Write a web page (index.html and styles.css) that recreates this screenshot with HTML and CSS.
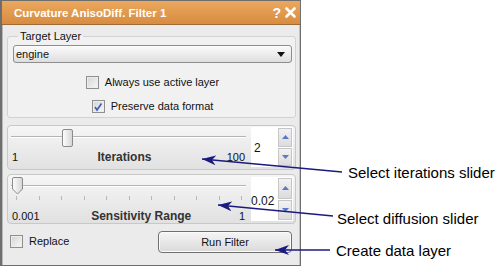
FILE: index.html
```html
<!doctype html>
<html lang="en-us">
  <head>
    <meta charset="utf-8">
    <title>Curvature AnisoDiff. Filter 1</title>
    <link rel="stylesheet" href="styles.css">
  </head>
  <body>
	<div class="stage">
		<div class="panel">
			<div class="titlebar">
				<span class="title">Curvature AnisoDiff. Filter 1</span>
				<span class="tools">
					<span class="help">?</span>
					<svg class="close" width="11" height="11" viewBox="0 0 11 11"><path d="M1.5 1.5 L9.5 9.5 M9.5 1.5 L1.5 9.5" stroke="#fff" stroke-width="2.6" stroke-linecap="round"/></svg>
				</span>
			</div>
			<div class="content">
				<fieldset class="group">
					<legend>Target Layer</legend>
					<div class="combo">
						<span>engine</span>
						<svg width="8" height="5" viewBox="0 0 8 5"><path d="M0 0 H8 L4 5 Z" fill="#111"/></svg>
					</div>
					<div class="checks">
						<label class="check"><span class="box"></span>Always use active layer</label>
						<label class="check"><span class="box checked"><svg width="10" height="10" viewBox="0 0 10 10"><path d="M2 5 L4 8 L8.5 1.5" stroke="#3a5cb8" stroke-width="1.6" fill="none"/></svg></span>Preserve data format</label>
					</div>
				</fieldset>

				<div class="slider-box">
					<div class="slider">
						<div class="track">
							<div class="groove"></div>
							<div class="handle" style="left: 51px;"></div>
						</div>
						<div class="labels">
							<span>1</span>
							<b>Iterations</b>
							<span>100</span>
						</div>
					</div>
					<div class="spin">
						<span class="value">2</span>
						<div class="buttons">
							<div class="btn"><svg width="7" height="4" viewBox="0 0 7 4"><path d="M0 4 H7 L3.5 0 Z" fill="#5a78c8"/></svg></div>
							<div class="btn"><svg width="7" height="4" viewBox="0 0 7 4"><path d="M0 0 H7 L3.5 4 Z" fill="#5a78c8"/></svg></div>
						</div>
					</div>
				</div>

				<div class="slider-box ticked">
					<div class="slider">
						<div class="track">
							<div class="groove"></div>
							<svg class="pointer" style="left: 1px;" width="11" height="18" viewBox="0 0 11 18">
								<defs>
									<linearGradient id="hg" x1="0" y1="0" x2="1" y2="0">
										<stop offset="0" stop-color="#fdfdfd"/>
										<stop offset="1" stop-color="#d6d6d6"/>
									</linearGradient>
								</defs>
								<path d="M0.5 2 Q0.5 0.5 2 0.5 H9 Q10.5 0.5 10.5 2 V12 L5.5 17 L0.5 12 Z" fill="url(#hg)" stroke="#8a8a8a"/>
							</svg>
						</div>
						<div class="ticks">
							<i></i><i></i><i></i><i></i><i></i><i></i><i></i><i></i><i></i><i></i><i></i>
						</div>
						<div class="labels">
							<span>0.001</span>
							<b>Sensitivity Range</b>
							<span>1</span>
						</div>
					</div>
					<div class="spin">
						<span class="value">0.02</span>
						<div class="buttons">
							<div class="btn"><svg width="7" height="4" viewBox="0 0 7 4"><path d="M0 4 H7 L3.5 0 Z" fill="#5a78c8"/></svg></div>
							<div class="btn"><svg width="7" height="4" viewBox="0 0 7 4"><path d="M0 0 H7 L3.5 4 Z" fill="#5a78c8"/></svg></div>
						</div>
					</div>
				</div>

				<div class="footer">
					<label class="check"><span class="box"></span>Replace</label>
					<div class="button">Run Filter</div>
				</div>
			</div>
		</div>

		<svg class="arrows" width="504" height="269" viewBox="0 0 504 269">
			<defs>
				<marker id="head" markerWidth="14" markerHeight="10" refX="0" refY="5" orient="auto" markerUnits="userSpaceOnUse">
					<path d="M0 5 L14 0 L10 5 L14 10 Z" fill="#1a1a80"/>
				</marker>
			</defs>
			<line x1="202" y1="159" x2="342" y2="172" stroke="#1a1a80" stroke-width="1.3" marker-start="url(#head)"/>
			<line x1="218" y1="205" x2="333" y2="216" stroke="#1a1a80" stroke-width="1.3" marker-start="url(#head)"/>
			<line x1="275" y1="250" x2="330" y2="250" stroke="#1a1a80" stroke-width="1.3" marker-start="url(#head)"/>
		</svg>
		<div class="note note-iter">Select iterations slider</div>
		<div class="note note-diff">Select diffusion slider</div>
		<div class="note note-layer">Create data layer</div>
	</div>
  </body>
</html>
```

FILE: styles.css
```css
body
{
	margin: 0;
	background: #fff;
	font-family: "Liberation Sans", Arial, sans-serif;
	font-size: 11px;
	color: #111;
}

.stage
{
	position: relative;
	width: 504px;
	height: 269px;
}

.panel
{
	box-sizing: border-box;
	width: 301px;
	height: 266px;
	border: 1px solid #6e6e6e;
	border-left-width: 2px;
	background: #ebebeb;
	box-shadow: inset 1px 0 0 #b8b8b8, inset -1px 0 0 #c4c4c4;
	display: flex;
	flex-direction: column;
}

.titlebar
{
	height: 23px;
	display: flex;
	align-items: center;
	justify-content: space-between;
	padding: 0 4px 0 12px;
	background: linear-gradient(#eba85e, #d78c40);
	border-bottom: 1px solid #a06a34;
}

.title
{
	color: #fff;
	font-weight: bold;
	font-size: 11.5px;
	margin-top: 1px;
}

.tools
{
	display: flex;
	align-items: center;
	gap: 4px;
}

.help
{
	color: #fff;
	font-weight: bold;
	font-size: 14px;
}

.content
{
	flex: 1;
	padding: 5px 4px 0 5px;
	display: flex;
	flex-direction: column;
}

.group
{
	margin: 0;
	padding: 0 3px 4px 5px;
	border: 1px solid #d2d2d2;
	border-radius: 3px;
	background: #f1f1f1;
}

.group legend
{
	padding: 0 2px;
	margin-left: 5px;
	line-height: 13px;
}

.combo
{
	box-sizing: border-box;
	height: 18px;
	margin-top: 2px;
	padding: 0 6px 0 2px;
	display: flex;
	align-items: center;
	justify-content: space-between;
	border: 1px solid #8e8e8e;
	border-radius: 3px;
	background: linear-gradient(#fbfbfb, #dedede);
}

.checks
{
	display: flex;
	flex-direction: column;
	align-items: center;
	gap: 11px;
	margin-top: 13px;
}

.check
{
	display: flex;
	align-items: center;
	gap: 6px;
	line-height: 13px;
}

.box
{
	box-sizing: border-box;
	width: 13px;
	height: 13px;
	border: 1px solid #8f8f8f;
	background: linear-gradient(135deg, #d4d4d4, #f8f8f8);
	box-shadow: inset 0 0 0 1px #ededed;
	display: flex;
	align-items: center;
	justify-content: center;
}

.slider-box
{
	box-sizing: border-box;
	margin-top: 7px;
	height: 45px;
	display: flex;
	gap: 5px;
	padding: 1px 2px 0 3px;
	border: 1px solid #c8c8c8;
	border-radius: 4px;
	background: linear-gradient(#f6f6f6, #e1e1e1);
}

.slider-box.ticked
{
	margin-top: 4px;
	height: 50px;
}

.slider
{
	flex: 1;
	display: flex;
	flex-direction: column;
}

.track
{
	position: relative;
	height: 18px;
	margin-top: 2px;
}

.groove
{
	position: absolute;
	left: 0;
	right: 0;
	top: 7px;
	height: 1px;
	background: #b4b4b4;
	border-bottom: 1px solid #fff;
}

.handle
{
	position: absolute;
	top: 0;
	box-sizing: border-box;
	width: 11px;
	height: 18px;
	border: 1px solid #8a8a8a;
	border-radius: 2px;
	background: linear-gradient(90deg, #fdfdfd, #d6d6d6);
}

.pointer
{
	position: absolute;
	top: -1px;
}

.ticks
{
	display: flex;
	justify-content: space-between;
	padding: 0 4px 0 5px;
	margin-top: 1px;
	height: 4px;
}

.ticks i
{
	width: 1px;
	height: 4px;
	background: #b8b8b8;
}

.labels
{
	display: flex;
	justify-content: space-between;
	align-items: center;
	height: 14px;
	margin-top: 3px;
	padding: 0 1px;
}

.ticked .labels
{
	margin-top: 9px;
}

.labels b
{
	font-size: 12px;
	color: #333;
	margin-left: 4px;
}

.spin
{
	box-sizing: border-box;
	width: 42px;
	height: 40px;
	margin-top: 0;
	display: flex;
	justify-content: space-between;
	background: #fff;
	padding-left: 3px;
}

.ticked .spin
{
	height: 44px;
	margin-top: 1px;
}

.spin .value
{
	align-self: center;
	font-size: 12px;
	margin-left: 0;
	margin-top: 2px;
}

.ticked .spin .value
{
	margin-left: -3px;
	margin-top: 4px;
}

.buttons
{
	width: 14px;
	display: flex;
	flex-direction: column;
	gap: 1px;
	padding: 1px 1px 1px 0;
}

.btn
{
	flex: 1;
	display: flex;
	align-items: center;
	justify-content: center;
	border: 1px solid #c6c6c6;
	background: linear-gradient(#f2f2f2, #dcdcdc);
}

.footer
{
	flex: 1;
	display: flex;
	align-items: center;
	justify-content: space-between;
	padding: 0 4px 6px 3px;
}

.button
{
	box-sizing: border-box;
	width: 134px;
	height: 22px;
	display: flex;
	align-items: center;
	justify-content: center;
	border: 1px solid #707070;
	border-radius: 4px;
	background: linear-gradient(#f5f5f5, #dadada);
	box-shadow: inset 0 0 0 1px #fafafa;
}

.arrows
{
	position: absolute;
	left: 0;
	top: 0;
	pointer-events: none;
}

.note
{
	position: absolute;
	font-size: 15px;
	color: #000;
	line-height: 18px;
}

.note-iter
{
	left: 348px;
	top: 164px;
}

.note-diff
{
	left: 337px;
	top: 210px;
}

.note-layer
{
	left: 336px;
	top: 242px;
}
```
